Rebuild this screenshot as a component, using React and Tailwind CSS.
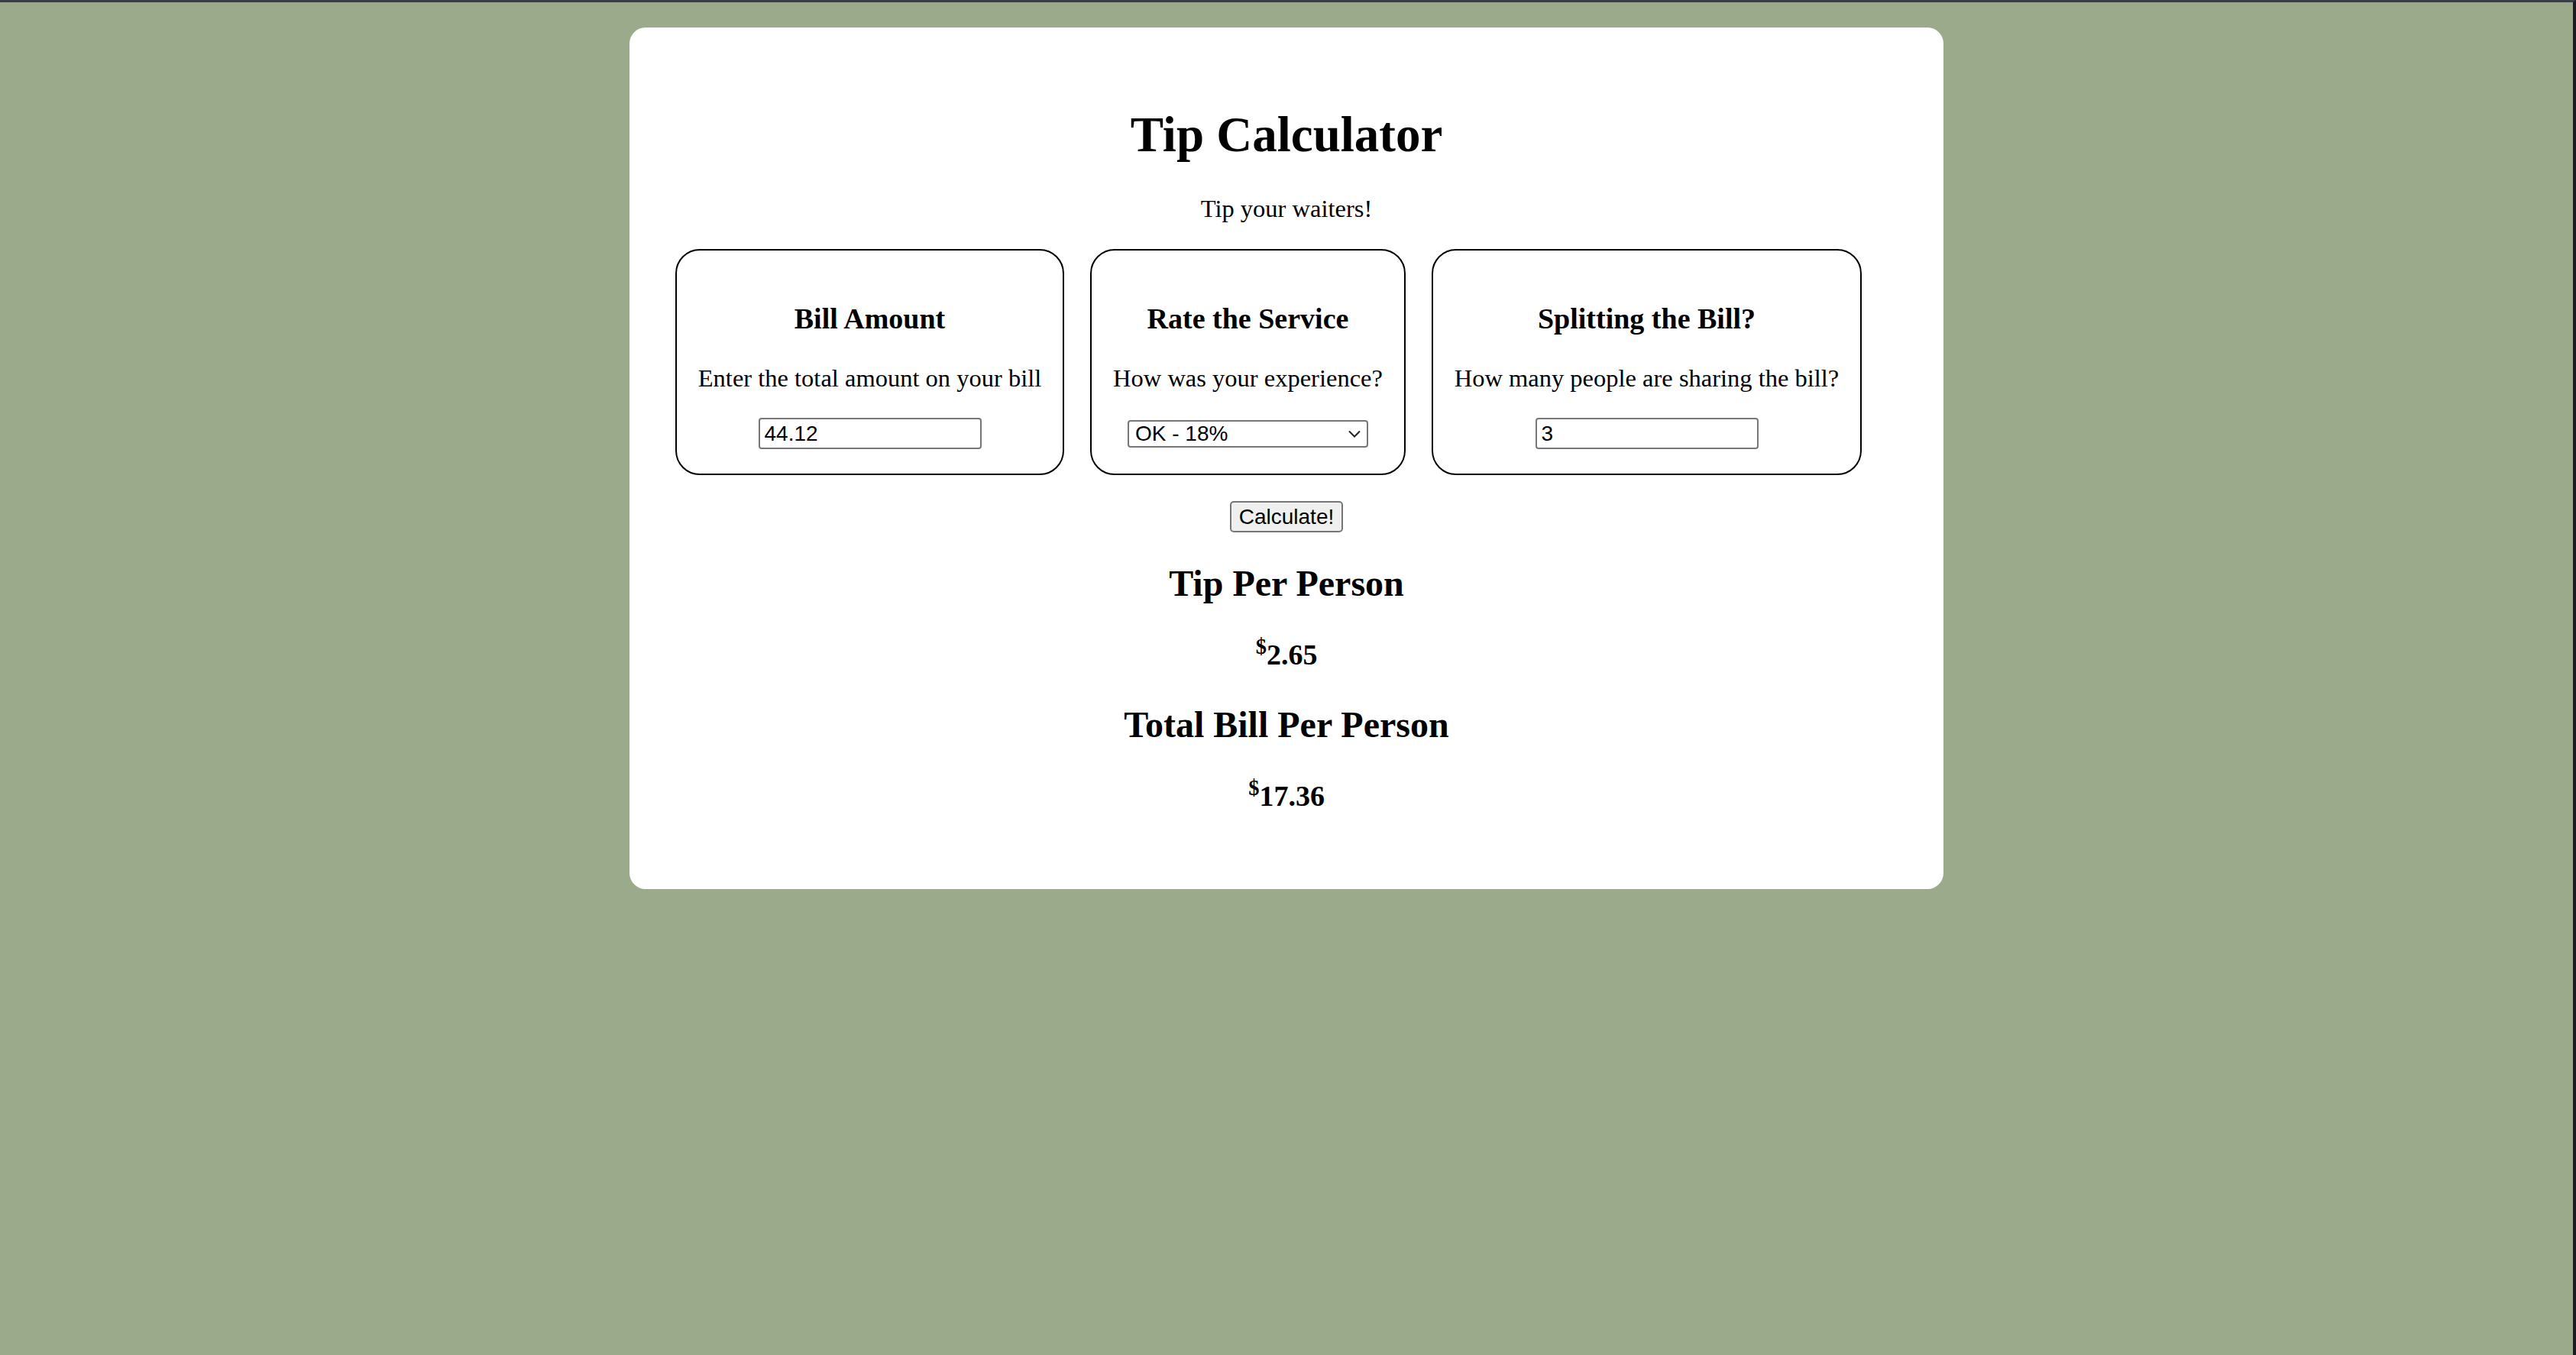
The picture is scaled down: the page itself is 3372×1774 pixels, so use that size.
import { useState } from 'react'

const serif = { fontFamily: '"Liberation Serif", "Times New Roman", serif' }

const Panel = ({ title, hint, width, children }) => (
  <div className={`${width} rounded-[32px] border-2 border-black pt-[66px] pb-[32px] text-center`}>
    <h3 className="text-[38px] leading-[46px] font-bold">{title}</h3>
    <p className="mt-[35px] text-[32.5px] leading-[40px]">{hint}</p>
    <div className="mt-[32px] h-[41px] flex items-center justify-center">{children}</div>
  </div>
)

export default function App() {
  const [bill, setBill] = useState('44.12')
  const [rate, setRate] = useState('0.18')
  const [people, setPeople] = useState('3')

  const amount = parseFloat(bill) || 0
  const count = parseInt(people) || 1
  const tip = Math.round(((amount * parseFloat(rate)) / count) * 100) / 100
  const share = Math.round((amount / count) * 100) / 100
  const total = share + tip

  return (
    <div className="min-h-screen bg-[#9caa8c] border-t-[3px] border-r-[4px] border-t-[#3a3d44] border-r-[#1c1c1e] text-black" style={serif}>
      <div className="pt-[33px]">
        <div className="mx-auto w-[1720px] bg-white rounded-[21px] pt-[100px] pb-[99px]">
          <h1 className="text-center text-[65px] leading-[80px] font-bold">Tip Calculator</h1>
          <p className="mt-[37px] text-center text-[32.5px] leading-[40px]">Tip your waiters!</p>

          <div className="mt-[33px] pl-[60px] flex gap-[34px]">
            <Panel title="Bill Amount" hint="Enter the total amount on your bill" width="w-[509px]">
              <input
                type="text"
                value={bill}
                onChange={(e) => setBill(e.target.value)}
                className="w-[292px] h-[41px] border-2 border-[#767676] rounded-[4px] px-[6px] text-[28px] font-['Liberation_Sans',Arial,sans-serif] outline-none"
              />
            </Panel>
            <Panel title="Rate the Service" hint="How was your experience?" width="w-[413px]">
              <div className="relative w-[315px] h-[36px]">
                <select
                  value={rate}
                  onChange={(e) => setRate(e.target.value)}
                  className="appearance-none w-full h-full border-2 border-[#767676] rounded-[4px] bg-white pl-[8px] text-[28px] leading-[32px] font-['Liberation_Sans',Arial,sans-serif] outline-none"
                >
                  <option value="0.3">Outstanding - 30%</option>
                  <option value="0.2">Good - 20%</option>
                  <option value="0.18">OK - 18%</option>
                  <option value="0.15">Bad - 15%</option>
                </select>
                <svg className="absolute right-[10px] top-[13px] pointer-events-none" width="16" height="10" viewBox="0 0 16 10" fill="none">
                  <path d="M1 1.5 L8 8.5 L15 1.5" stroke="#222" strokeWidth="2" />
                </svg>
              </div>
            </Panel>
            <Panel title="Splitting the Bill?" hint="How many people are sharing the bill?" width="w-[563px]">
              <input
                type="text"
                value={people}
                onChange={(e) => setPeople(e.target.value)}
                className="w-[292px] h-[41px] border-2 border-[#767676] rounded-[4px] px-[6px] text-[28px] font-['Liberation_Sans',Arial,sans-serif] outline-none"
              />
            </Panel>
          </div>

          <div className="mt-[34px] flex justify-center">
            <button className="w-[148px] h-[41px] bg-[#efefef] border-2 border-[#767676] rounded-[5px] text-[28px] leading-none font-['Liberation_Sans',Arial,sans-serif]">
              Calculate!
            </button>
          </div>

          <h2 className="mt-[37px] text-center text-[48px] leading-[60px] font-bold">Tip Per Person</h2>
          <h3 className="mt-[40px] text-center text-[38px] leading-[46px] font-bold">
            <sup>$</sup>{tip.toFixed(2)}
          </h3>
          <h2 className="mt-[39px] text-center text-[48px] leading-[60px] font-bold">Total Bill Per Person</h2>
          <h3 className="mt-[40px] text-center text-[38px] leading-[46px] font-bold">
            <sup>$</sup>{total.toFixed(2)}
          </h3>
        </div>
      </div>
    </div>
  )
}
